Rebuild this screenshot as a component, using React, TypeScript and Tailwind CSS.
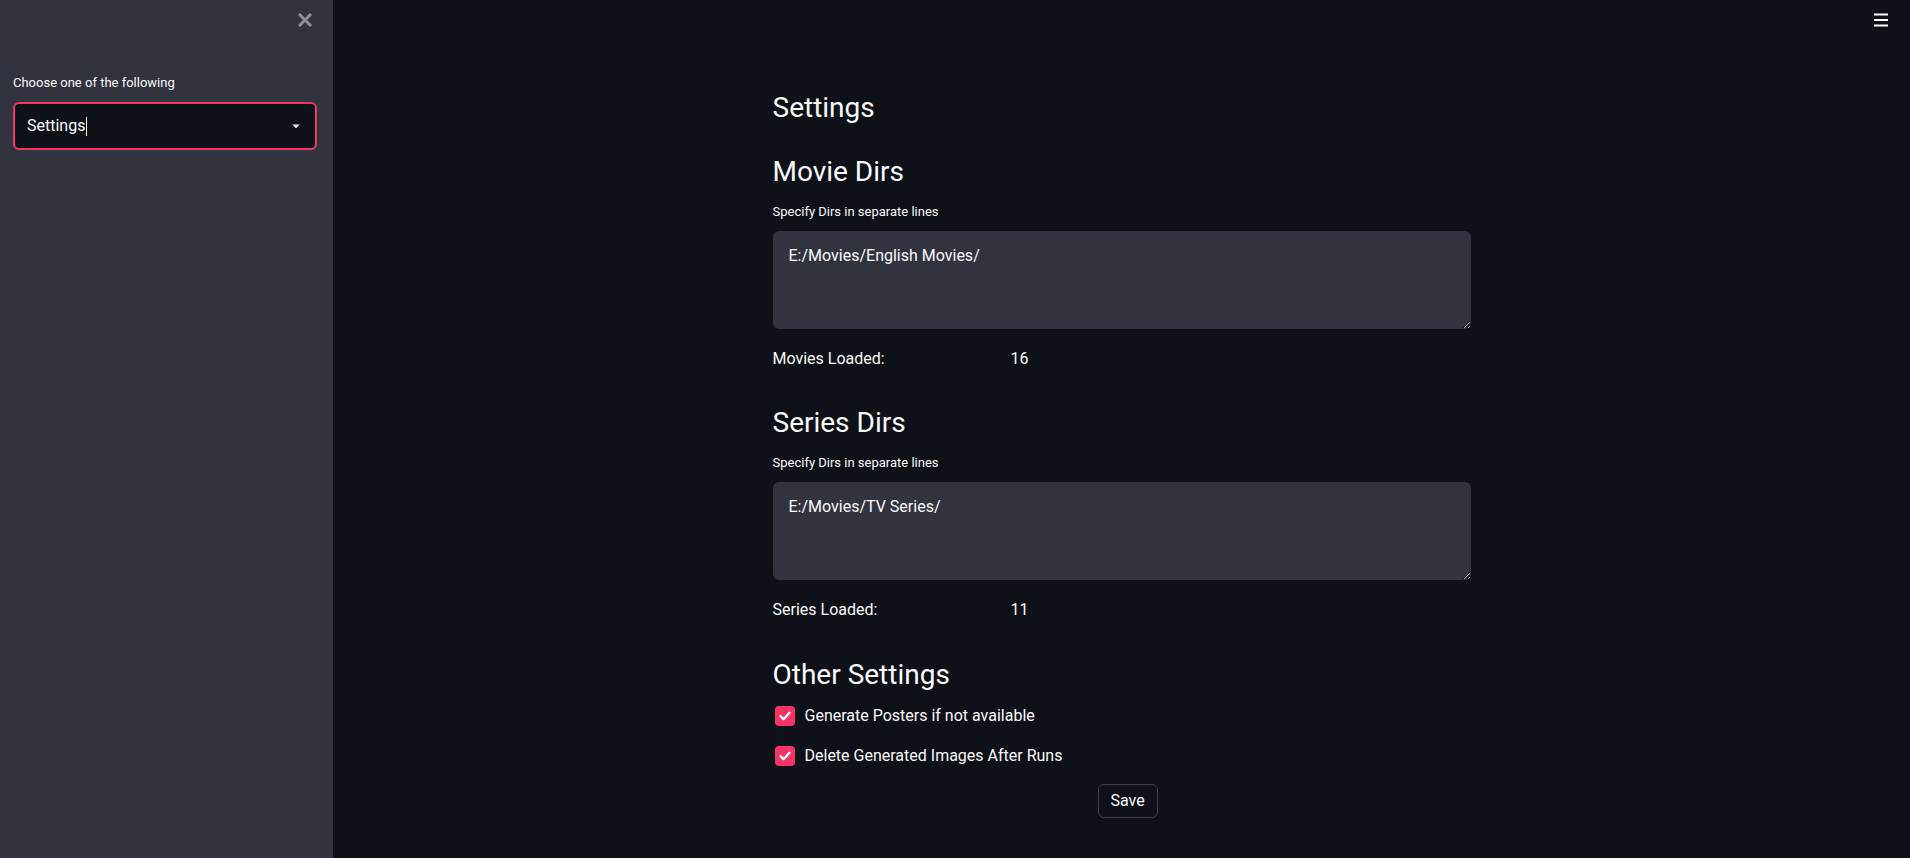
import { FC } from 'react';

const PINK = 'bg-[#f63366]';

const CloseIcon = () => (
  <svg width="14" height="14" viewBox="0 0 14 14" className="text-[#8d8f99]">
    <path d="M2 2L12 12M12 2L2 12" stroke="currentColor" strokeWidth="3" strokeLinecap="square" />
  </svg>
);

const MenuIcon = () => (
  <svg width="14" height="14" viewBox="0 0 14 14" className="text-[#fafafa]">
    <rect x="0" y="0.5" width="14" height="2" fill="currentColor" />
    <rect x="0" y="6" width="14" height="2" fill="currentColor" />
    <rect x="0" y="11.5" width="14" height="2" fill="currentColor" />
  </svg>
);

const CheckBox = () => (
  <span className={`ml-[2px] flex h-[20px] w-[20px] items-center justify-center rounded-[4px] ${PINK}`}>
    <svg width="14" height="14" viewBox="0 0 14 14" fill="none">
      <path d="M2.5 7.2L5.6 10.2L11.5 3.8" stroke="white" strokeWidth="2.4" strokeLinecap="round" strokeLinejoin="round" />
    </svg>
  </span>
);

type DirsProps = {
  title: string;
  value: string;
  loadedLabel: string;
  count: number;
};

const DirsSection: FC<DirsProps> = ({ title, value, loadedLabel, count }) => {
  return (
    <section>
      <h3 className="text-[28px] leading-[34px] font-normal">{title}</h3>
      <label className="mt-[13px] block text-[13px] leading-[20px]">Specify Dirs in separate lines</label>
      <textarea
        defaultValue={value}
        className="mt-[9px] block h-[98px] w-full resize-y rounded-[6px] bg-[#31333f] px-[16px] pt-[13px] text-[16px] leading-[24px] text-[#fafafa] outline-none [color-scheme:dark]"
      />
      <div className="mt-[18px] grid grid-cols-3 gap-4 text-[16px] leading-[24px]">
        <span>{loadedLabel}</span>
        <span>{count}</span>
        <span />
      </div>
    </section>
  );
};

export default function App() {
  return (
    <div className="flex h-screen w-full overflow-hidden bg-[#0e1117] font-['Roboto',sans-serif] text-[#fafafa]">
      <aside className="w-[333px] shrink-0 bg-[#31333f] pt-[13px] pl-[13px] pr-[16px]">
        <div className="flex justify-end pr-[5px]">
          <CloseIcon />
        </div>
        <label className="mt-[46px] block text-[13px] leading-[20px]">Choose one of the following</label>
        <div className="mt-[9px] flex h-[48px] w-[304px] items-center rounded-[6px] border-2 border-[#f63366] bg-[#0e1117] pl-[12px] pr-[10px]">
          <span className="text-[16px] leading-[24px]">Settings</span>
          <span className="ml-[1px] h-[19px] w-px bg-[#fafafa]" />
          <svg width="18" height="18" viewBox="0 0 24 24" className="ml-auto text-[#fafafa]">
            <path d="M7 10l5 5 5-5z" fill="currentColor" />
          </svg>
        </div>
      </aside>

      <main className="relative flex-1">
        <div className="absolute right-[22px] top-[13px]">
          <MenuIcon />
        </div>
        <div className="mx-auto w-[698px] pt-[91px]">
          <h3 className="text-[28px] leading-[34px] font-normal">Settings</h3>
          <div className="mt-[30px]">
            <DirsSection title="Movie Dirs" value="E:/Movies/English Movies/" loadedLabel="Movies Loaded:" count={16} />
          </div>
          <div className="mt-[35px]">
            <DirsSection title="Series Dirs" value="E:/Movies/TV Series/" loadedLabel="Series Loaded:" count={11} />
          </div>
          <h3 className="mt-[36px] text-[28px] leading-[34px] font-normal">Other Settings</h3>
          <div className="mt-[12px] flex flex-col gap-[16px]">
            <label className="flex items-center gap-[10px] text-[16px] leading-[24px]">
              <CheckBox />
              Generate Posters if not available
            </label>
            <label className="flex items-center gap-[10px] text-[16px] leading-[24px]">
              <CheckBox />
              Delete Generated Images After Runs
            </label>
          </div>
          <div className="mt-[16px] pl-[325px]">
            <button className="h-[34px] w-[60px] rounded-[6px] border border-[#fafafa]/20 text-[16px] leading-[24px]">
              Save
            </button>
          </div>
        </div>
      </main>
    </div>
  );
}
